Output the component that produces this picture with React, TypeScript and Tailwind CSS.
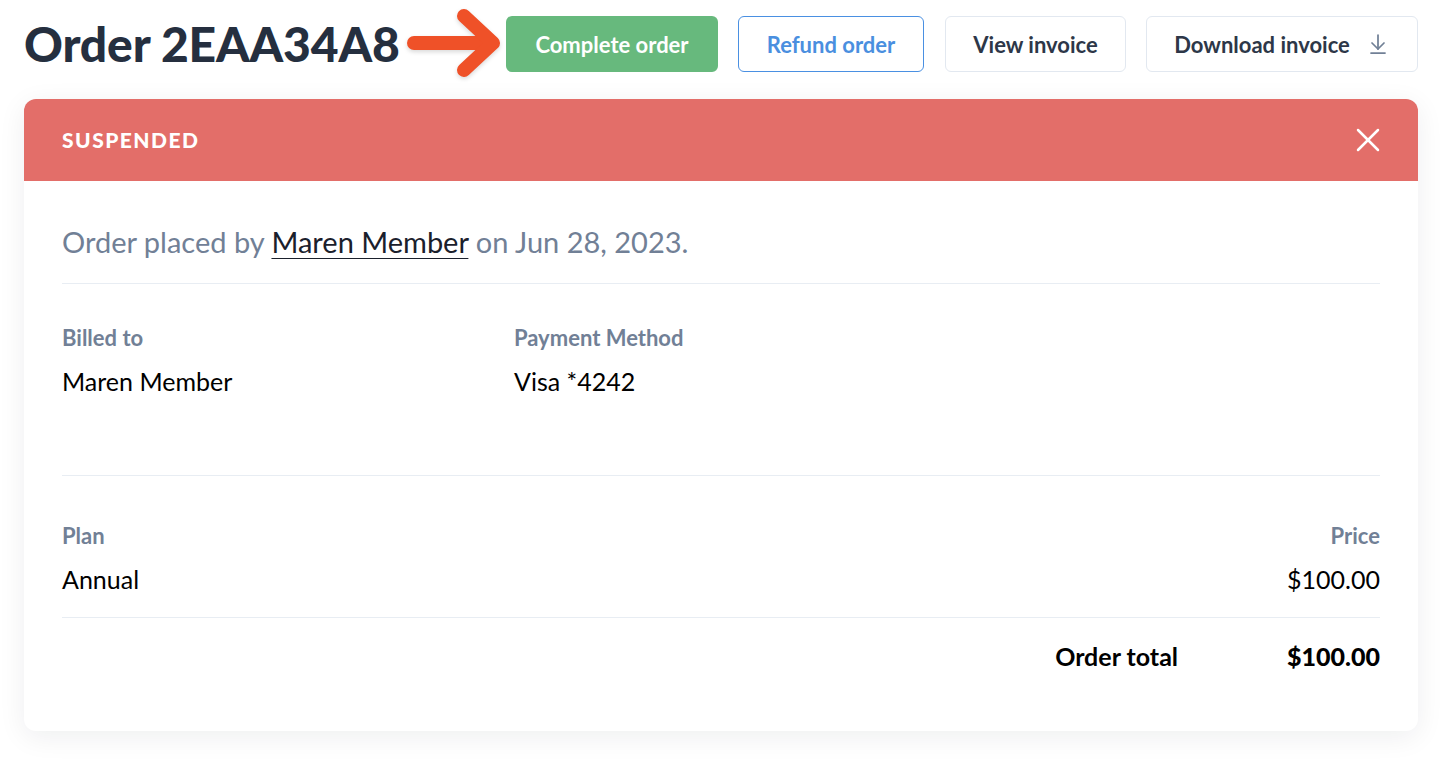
import { ArrowDownToLine, X } from "lucide-react";

const font = { fontFamily: "Lato, 'Open Sans', sans-serif" };

function PointerArrow() {
  return (
    <svg width="100" height="72" viewBox="0 0 100 72" className="shrink-0 drop-shadow-[0_2px_2px_rgba(0,0,0,0.15)]">
      <g fill="none" stroke="#ef5128" strokeWidth="14" strokeLinecap="round" strokeLinejoin="round">
        <path d="M12 35 H90" />
        <path d="M62 8 L91 35 L62 62" />
      </g>
    </svg>
  );
}

export default function App() {
  return (
    <div className="min-h-screen bg-white pb-7 pl-6 pr-[22px] text-[#1a202c]" style={font}>
      <header className="flex h-[88px] items-center justify-between">
        <div className="flex items-center gap-[2px]">
          <h1 className="text-[48px] font-black tracking-[-0.003em] text-[#252f3f]">Order 2EAA34A8</h1>
          <PointerArrow />
        </div>
        <div className="flex items-center">
          <button
            type="button"
            className="flex h-14 w-[212px] items-center justify-center rounded-md bg-[#67b97d] text-[22px] font-bold text-white"
          >
            Complete order
          </button>
          <button
            type="button"
            className="ml-5 flex h-14 w-[186px] items-center justify-center rounded-md border border-[#4a90e2] bg-white text-[22px] font-bold text-[#4a8fdf]"
          >
            Refund order
          </button>
          <button
            type="button"
            className="ml-[21px] flex h-14 w-[181px] items-center justify-center rounded-md border border-[#e2e8f0] bg-white text-[22px] font-bold text-[#2d3748]"
          >
            View invoice
          </button>
          <button
            type="button"
            className="ml-5 flex h-14 w-[272px] items-center justify-center gap-[16px] rounded-md border border-[#e2e8f0] bg-white text-[22px] font-bold text-[#2d3748]"
          >
            Download invoice
            <ArrowDownToLine className="h-6 w-6 text-[#718096]" strokeWidth={1.75} />
          </button>
        </div>
      </header>

      <section className="mt-[11px] overflow-hidden rounded-xl bg-white shadow-[0_6px_28px_rgba(15,23,42,0.07)]">
        <div className="flex h-[82px] items-center justify-between bg-[#e36e69] pl-[38px] pr-[30px]">
          <span className="text-[21px] font-black uppercase tracking-[0.07em] text-white">Suspended</span>
          <X className="h-10 w-10 text-white" strokeWidth={1.5} />
        </div>

        <div className="px-[38px]">
          <div className="border-b border-[#e8edf3] pb-[23px] pt-[43px]">
            <p className="text-[29px] leading-9 text-[#718096]">
              Order placed by{" "}
              <a href="#" className="text-[#1a202c] underline decoration-1 underline-offset-[5px]">
                Maren Member
              </a>{" "}
              on Jun 28, 2023.
            </p>
          </div>

          <div className="grid grid-cols-[452px_1fr] border-b border-[#e8edf3] pb-[78px] pt-10">
            <div>
              <div className="text-[22px] font-bold leading-7 text-[#718096]">Billed to</div>
              <div className="mt-[13px] text-[25px] leading-8 text-black">Maren Member</div>
            </div>
            <div>
              <div className="text-[22px] font-bold leading-7 text-[#718096]">Payment Method</div>
              <div className="mt-[13px] text-[25px] leading-8 text-black">Visa *4242</div>
            </div>
          </div>

          <div className="flex justify-between border-b border-[#e8edf3] pb-[22px] pt-[46px]">
            <div>
              <div className="text-[22px] font-bold leading-7 text-[#718096]">Plan</div>
              <div className="mt-[13px] text-[25px] leading-8 text-black">Annual</div>
            </div>
            <div className="text-right">
              <div className="text-[22px] font-bold leading-7 text-[#718096]">Price</div>
              <div className="mt-[13px] text-[25px] leading-8 text-black">$100.00</div>
            </div>
          </div>

          <div className="flex justify-end gap-[109px] pb-[59px] pt-[22px]">
            <span className="text-[25px] font-bold leading-8 text-black">Order total</span>
            <span className="text-[25px] font-black leading-8 text-black">$100.00</span>
          </div>
        </div>
      </section>
    </div>
  );
}
